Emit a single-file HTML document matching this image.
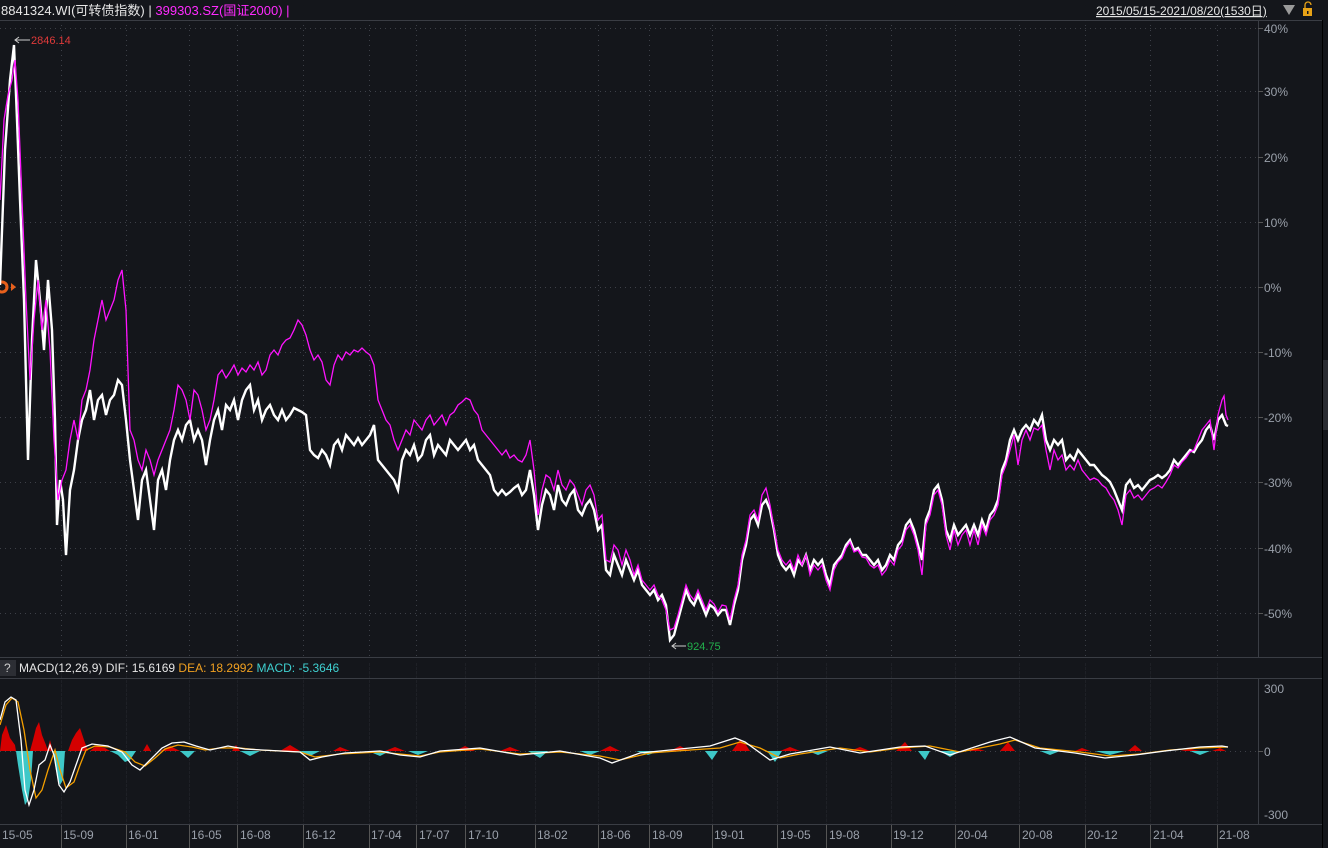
<!DOCTYPE html>
<html><head><meta charset="utf-8"><style>
html,body{margin:0;padding:0;background:#14161b;width:1328px;height:848px;overflow:hidden;font-family:"Liberation Sans","Noto Sans CJK SC",sans-serif}
svg{position:absolute;left:0;top:0}
</style></head><body>
<svg width="1328" height="848" viewBox="0 0 1328 848" xmlns="http://www.w3.org/2000/svg" font-family="Liberation Sans, Noto Sans CJK SC, sans-serif">
<rect width="1328" height="848" fill="#14161b"/>
<!-- frame lines -->
<g stroke="#3a3d44" stroke-width="1" fill="none">
<line x1="0" y1="20.5" x2="1322" y2="20.5"/>
<line x1="0" y1="657.5" x2="1322" y2="657.5"/>
<line x1="0" y1="678.5" x2="1322" y2="678.5"/>
<line x1="0" y1="824.5" x2="1322" y2="824.5"/>
<line x1="1258.5" y1="20" x2="1258.5" y2="657"/>
<line x1="1258.5" y1="678" x2="1258.5" y2="824"/>
</g>
<line x1="1322.5" y1="20" x2="1322.5" y2="848" stroke="#000" stroke-width="1"/>
<rect x="1323" y="360" width="5" height="70" fill="#2a2c32"/>
<!-- grid -->
<g stroke="#3d4048" stroke-width="1" stroke-dasharray="1,4" fill="none">
<line x1="0" y1="28.5" x2="1258" y2="28.5"/><line x1="0" y1="91.5" x2="1258" y2="91.5"/><line x1="0" y1="157.5" x2="1258" y2="157.5"/><line x1="0" y1="222.5" x2="1258" y2="222.5"/><line x1="0" y1="287.5" x2="1258" y2="287.5"/><line x1="0" y1="352.5" x2="1258" y2="352.5"/><line x1="0" y1="417.5" x2="1258" y2="417.5"/><line x1="0" y1="482.5" x2="1258" y2="482.5"/><line x1="0" y1="548.5" x2="1258" y2="548.5"/><line x1="0" y1="613.5" x2="1258" y2="613.5"/>
<line x1="0" y1="751.5" x2="1258" y2="751.5"/>
<g id="vg">
<line x1="61.5" y1="20" x2="61.5" y2="657"/><line x1="126.5" y1="20" x2="126.5" y2="657"/><line x1="189.5" y1="20" x2="189.5" y2="657"/><line x1="237.5" y1="20" x2="237.5" y2="657"/><line x1="303.5" y1="20" x2="303.5" y2="657"/><line x1="369.5" y1="20" x2="369.5" y2="657"/><line x1="416.5" y1="20" x2="416.5" y2="657"/><line x1="465.5" y1="20" x2="465.5" y2="657"/><line x1="535.5" y1="20" x2="535.5" y2="657"/><line x1="598.5" y1="20" x2="598.5" y2="657"/><line x1="649.5" y1="20" x2="649.5" y2="657"/><line x1="712.5" y1="20" x2="712.5" y2="657"/><line x1="777.5" y1="20" x2="777.5" y2="657"/><line x1="826.5" y1="20" x2="826.5" y2="657"/><line x1="891.5" y1="20" x2="891.5" y2="657"/><line x1="955.5" y1="20" x2="955.5" y2="657"/><line x1="1019.5" y1="20" x2="1019.5" y2="657"/><line x1="1085.5" y1="20" x2="1085.5" y2="657"/><line x1="1150.5" y1="20" x2="1150.5" y2="657"/><line x1="1217.5" y1="20" x2="1217.5" y2="657"/>
</g>
<use href="#vg" transform="translate(0,658) scale(1,0.26)"/>
</g>
<!-- axis ticks -->
<g stroke="#555" stroke-width="1">
<line x1="1258" y1="28.5" x2="1263" y2="28.5"/><line x1="1258" y1="91.5" x2="1263" y2="91.5"/><line x1="1258" y1="157.5" x2="1263" y2="157.5"/><line x1="1258" y1="222.5" x2="1263" y2="222.5"/><line x1="1258" y1="287.5" x2="1263" y2="287.5"/><line x1="1258" y1="352.5" x2="1263" y2="352.5"/><line x1="1258" y1="417.5" x2="1263" y2="417.5"/><line x1="1258" y1="482.5" x2="1263" y2="482.5"/><line x1="1258" y1="548.5" x2="1263" y2="548.5"/><line x1="1258" y1="613.5" x2="1263" y2="613.5"/>
<line x1="1258" y1="751.5" x2="1263" y2="751.5"/>
</g>
<g fill="#9aa0aa" font-size="12">
<text x="1264" y="33">40%</text><text x="1264" y="96">30%</text><text x="1264" y="162">20%</text><text x="1264" y="227">10%</text><text x="1264" y="292">0%</text><text x="1264" y="357">-10%</text><text x="1264" y="422">-20%</text><text x="1264" y="487">-30%</text><text x="1264" y="553">-40%</text><text x="1264" y="618">-50%</text>
<text x="1264" y="693">300</text><text x="1264" y="756">0</text><text x="1264" y="819">-300</text>
</g>
<!-- header -->
<text x="1" y="15" font-size="13" fill="#e6e6e6">8841324.WI(可转债指数) <tspan fill="#e6e6e6">|</tspan> <tspan fill="#ff2bff">399303.SZ(国证2000) |</tspan></text>
<text x="1096" y="15" font-size="12" fill="#e6e6e6" text-decoration="underline">2015/05/15-2021/08/20(1530日)</text>
<polygon points="1283,5 1295,5 1289,15" fill="#9a9a9a"/>
<rect x="1303" y="8" width="9" height="8" fill="#e8a317"/>
<path d="M1305,8 v-3 a3,3 0 0 1 6,0" stroke="#e8a317" stroke-width="1.3" fill="none"/>
<rect x="1307" y="11" width="1.5" height="3" fill="#14161b"/>
<!-- marker -->
<circle cx="2" cy="287" r="5" fill="none" stroke="#e8601c" stroke-width="3"/>
<polygon points="11,283 16,287 11,291" fill="#e8601c"/>
<!-- main lines -->
<polyline fill="none" stroke="#fff" stroke-width="2.4" stroke-linejoin="miter" points="0,285 5,150 10,80 14,45 17,120 20,200 24,300 28,460 32,340 36,260 40,300 44,350 48,280 52,330 55,420 57,525 60,480 63,500 66,555 70,490 74,470 78,440 82,420 86,410 90,390 94,420 98,400 102,395 106,415 110,400 114,395 118,380 122,385 126,420 130,460 134,490 138,520 142,480 146,470 150,500 154,530 158,480 162,470 166,490 170,460 174,440 178,430 182,440 186,425 190,420 194,440 198,430 202,440 206,465 210,440 214,420 218,410 222,430 226,405 230,410 234,400 238,420 242,400 246,390 250,385 254,410 258,400 262,420 266,410 270,405 274,415 278,420 282,410 286,420 290,415 294,408 298,410 302,412 306,415 310,450 314,455 318,458 322,450 326,455 330,465 334,445 338,440 342,450 346,435 350,440 354,445 358,438 362,445 366,440 370,435 374,425 378,460 382,465 386,470 390,475 394,480 398,490 402,460 406,450 410,455 414,445 418,460 422,455 426,440 430,435 434,455 438,445 442,450 446,455 450,440 454,445 458,450 462,445 466,440 470,450 474,445 478,460 482,465 486,470 490,475 494,490 498,495 502,490 506,495 510,492 514,488 518,485 522,495 526,490 530,470 534,495 538,530 542,505 546,490 550,495 554,510 558,485 562,500 566,505 570,495 574,490 578,510 582,515 586,505 590,500 594,510 598,530 602,525 606,570 610,575 614,555 618,565 622,575 626,560 630,570 634,580 638,570 642,585 646,590 650,595 654,590 658,600 662,595 666,605 670,640 674,635 678,620 682,605 686,590 690,600 694,605 698,595 702,605 706,615 710,605 714,608 718,615 722,610 726,610 730,625 734,605 738,590 742,560 746,545 750,520 754,515 758,525 762,505 766,500 770,510 774,530 778,555 782,565 786,570 790,565 794,575 798,560 802,565 806,555 810,570 814,560 818,565 822,560 826,575 830,585 834,565 838,560 842,555 846,545 850,540 854,550 858,548 862,555 866,555 870,560 874,565 878,560 882,570 886,565 890,555 894,560 898,545 902,540 906,525 910,520 914,530 918,545 922,560 926,520 930,510 934,490 938,485 942,500 946,530 950,540 954,525 958,535 962,530 966,525 970,535 974,525 978,535 982,520 986,530 990,515 994,510 998,500 1002,470 1006,460 1010,440 1014,430 1018,440 1022,430 1026,425 1030,430 1034,420 1038,425 1042,415 1046,440 1050,450 1054,440 1058,445 1062,440 1066,460 1070,455 1074,460 1078,450 1082,455 1086,460 1090,465 1094,465 1098,470 1102,475 1106,478 1110,482 1114,490 1118,500 1122,510 1126,485 1130,480 1134,488 1138,485 1142,490 1146,485 1150,480 1154,478 1158,475 1162,478 1166,475 1170,470 1174,460 1178,465 1182,460 1186,455 1190,450 1194,452 1198,445 1202,440 1206,430 1210,425 1214,440 1218,420 1222,415 1226,425 1228,426"/>
<polyline fill="none" stroke="#ff14ff" stroke-width="1.3" points="0,200 4,120 8,95 12,80 15,60 18,100 22,200 26,300 30,380 34,320 38,280 42,330 46,300 50,350 54,440 58,500 62,480 66,470 70,440 74,420 78,440 82,400 86,390 90,370 94,340 98,320 102,300 106,320 110,310 114,300 118,280 122,270 126,310 130,430 134,440 138,460 142,470 146,450 150,460 154,475 158,460 162,450 166,440 170,430 174,410 178,385 182,390 186,400 190,420 194,390 198,395 202,410 206,430 210,420 214,400 218,375 222,370 226,378 230,372 234,365 238,375 242,368 246,372 250,365 254,370 258,362 262,375 266,370 270,355 274,350 278,355 282,345 286,340 290,338 294,330 298,320 302,325 306,335 310,350 314,360 318,355 322,362 326,380 330,385 334,365 338,355 342,360 346,352 350,355 354,350 358,352 362,348 366,352 370,355 374,365 378,400 382,410 386,420 390,425 394,440 398,450 402,440 406,430 410,435 414,420 418,425 422,430 426,420 430,415 434,425 438,420 442,415 446,425 450,415 454,412 458,405 462,402 466,398 470,400 474,410 478,415 482,430 486,435 490,440 494,445 498,450 502,455 506,450 510,458 514,455 518,460 522,462 526,455 530,440 534,470 538,515 542,490 546,475 550,478 554,490 558,470 562,485 566,490 570,480 574,485 578,495 582,505 586,490 590,485 594,495 598,520 602,515 606,560 610,562 614,545 618,550 622,565 626,550 630,560 634,575 638,565 642,580 646,585 650,590 654,585 658,595 662,600 666,610 670,630 674,628 678,615 682,600 686,585 690,595 694,600 698,590 702,600 706,610 710,600 714,604 718,612 722,605 726,606 730,620 734,600 738,585 742,555 746,540 750,515 754,510 758,520 762,495 766,488 770,505 774,528 778,550 782,560 786,565 790,560 794,570 798,555 802,565 806,555 810,575 814,565 818,570 822,565 826,580 830,590 834,570 838,562 842,558 846,548 850,542 854,552 858,550 862,557 866,558 870,565 874,568 878,565 882,575 886,570 890,560 894,565 898,550 902,545 906,530 910,525 914,535 918,550 922,575 926,525 930,515 934,495 938,490 942,505 946,535 950,550 954,530 958,545 962,535 966,530 970,545 974,530 978,545 982,525 986,535 990,520 994,515 998,505 1002,475 1006,465 1010,450 1014,435 1018,465 1022,440 1026,430 1030,440 1034,428 1038,430 1042,425 1046,450 1050,470 1054,450 1058,460 1062,455 1066,470 1070,465 1074,470 1078,460 1082,470 1086,475 1090,480 1094,478 1098,480 1102,485 1106,488 1110,495 1114,500 1118,510 1122,525 1126,495 1130,490 1134,498 1138,495 1142,500 1146,495 1150,490 1154,488 1158,485 1162,488 1166,482 1170,475 1174,465 1178,468 1182,462 1186,458 1190,452 1194,450 1198,440 1202,430 1206,425 1210,420 1214,450 1218,415 1222,400 1224,396 1226,415 1228,420"/>
<!-- annotations -->
<line x1="15" y1="40" x2="30" y2="40" stroke="#ccc"/><polyline points="19,37 15,40 19,43" fill="none" stroke="#ccc"/>
<text x="31" y="44" font-size="11" fill="#e03a3a">2846.14</text>
<line x1="672" y1="646" x2="686" y2="646" stroke="#ccc"/><polyline points="676,643 672,646 676,649" fill="none" stroke="#ccc"/>
<text x="687" y="650" font-size="11" fill="#22b14c">924.75</text>
<!-- MACD header -->
<rect x="0" y="660" width="16" height="16" fill="#2c2e34"/>
<text x="4" y="672" font-size="12" fill="#ccc">?</text>
<text x="19" y="672" font-size="12" fill="#e6e6e6">MACD(12,26,9)  DIF: 15.6169  <tspan fill="#f0a020">DEA: 18.2992</tspan>  <tspan fill="#3fd0d0">MACD: -5.3646</tspan></text>
<!-- MACD histogram -->
<g fill="#d40000">
<polygon points="0,751 2,735 6,725 10,738 15,745 16,751"/>
<polygon points="30,751 33,740 36,728 39,722 42,735 46,745 48,751"/>
<polygon points="47,751 50,740 53,751"/>
<polygon points="68,751 72,740 76,733 80,728 84,740 88,751"/>
<polygon points="90,751 96,746 105,748 110,751"/>
<polygon points="143,751 147,744 151,751"/><polygon points="160,751 170,746 180,751"/>
<polygon points="232,751 236,745 240,751"/><polygon points="280,751 290,745 300,751"/>
<polygon points="333,751 340,747 350,751"/><polygon points="385,751 395,747 405,751"/>
<polygon points="455,751 465,746 475,751"/><polygon points="500,751 510,747 520,751"/>
<polygon points="600,751 610,746 620,751"/><polygon points="670,751 680,746 690,751"/>
<polygon points="732,751 740,740 746,745 750,751"/><polygon points="780,751 790,747 800,751"/>
<polygon points="850,751 860,747 870,751"/><polygon points="896,751 905,742 912,751"/>
<polygon points="965,751 975,748 985,751"/><polygon points="1000,751 1008,742 1015,751"/>
<polygon points="1075,751 1082,748 1090,751"/><polygon points="1128,751 1135,745 1142,751"/>
<polygon points="1180,751 1190,749 1200,751"/><polygon points="1212,751 1220,748 1226,751"/>
</g>
<g fill="#3ec8c8">
<polygon points="16,751 18,765 22,790 25,805 28,800 31,780 33,751"/>
<polygon points="53,751 56,770 60,785 63,780 65,751"/>
<polygon points="110,751 118,755 125,762 130,760 136,751"/>
<polygon points="180,751 188,758 195,751"/><polygon points="240,751 250,756 260,751"/>
<polygon points="300,751 310,756 320,751"/><polygon points="368,751 380,756 390,751"/>
<polygon points="408,751 418,755 428,751"/><polygon points="528,751 540,758 548,751"/>
<polygon points="580,751 590,755 600,751"/><polygon points="636,751 648,755 660,751"/>
<polygon points="705,751 712,760 718,751"/><polygon points="767,751 775,762 782,751"/>
<polygon points="808,751 818,755 828,751"/><polygon points="918,751 925,760 930,751"/>
<polygon points="940,751 950,757 960,751"/><polygon points="1040,751 1050,755 1060,751"/>
<polygon points="1095,751 1110,755 1125,751"/><polygon points="1190,751 1200,755 1210,751"/>
</g>
<!-- DEA / DIF -->
<polyline fill="none" stroke="#f5a000" stroke-width="1.3" points="0,725 6,705 12,698 18,702 24,730 30,770 36,798 42,790 48,770 55,750 60,770 66,788 74,782 80,765 86,750 95,746 110,747 125,752 135,762 145,766 155,758 165,749 178,745 192,747 205,750 220,748 240,748 260,750 300,752 315,757 340,754 380,752 400,754 420,756 440,752 480,749 520,754 560,752 600,756 620,760 650,753 690,750 720,748 740,742 760,748 780,758 800,754 840,748 870,752 900,748 930,746 960,752 1000,744 1015,740 1040,748 1080,752 1110,756 1140,754 1170,750 1200,748 1228,747"/>
<polyline fill="none" stroke="#fff" stroke-width="1.3" points="0,720 5,702 11,697 16,700 21,740 25,790 29,805 34,790 39,765 45,760 50,745 54,755 59,785 64,792 70,782 76,765 82,748 92,744 108,746 122,752 132,765 140,770 150,760 162,748 172,743 184,742 196,746 210,750 228,746 245,749 262,750 300,752 310,760 322,757 345,753 380,751 400,755 420,757 440,751 480,748 520,755 560,751 600,758 612,763 640,753 680,749 710,746 735,738 745,742 770,760 790,754 830,747 860,753 900,747 925,746 950,755 990,742 1010,737 1035,748 1075,753 1105,758 1135,755 1165,751 1200,747 1222,746 1228,747"/>
<!-- date labels -->
<g stroke="#555" stroke-width="1">
<line x1="61.5" y1="825" x2="61.5" y2="848"/><line x1="126.5" y1="825" x2="126.5" y2="848"/><line x1="189.5" y1="825" x2="189.5" y2="848"/><line x1="237.5" y1="825" x2="237.5" y2="848"/><line x1="303.5" y1="825" x2="303.5" y2="848"/><line x1="369.5" y1="825" x2="369.5" y2="848"/><line x1="416.5" y1="825" x2="416.5" y2="848"/><line x1="465.5" y1="825" x2="465.5" y2="848"/><line x1="535.5" y1="825" x2="535.5" y2="848"/><line x1="598.5" y1="825" x2="598.5" y2="848"/><line x1="649.5" y1="825" x2="649.5" y2="848"/><line x1="712.5" y1="825" x2="712.5" y2="848"/><line x1="777.5" y1="825" x2="777.5" y2="848"/><line x1="826.5" y1="825" x2="826.5" y2="848"/><line x1="891.5" y1="825" x2="891.5" y2="848"/><line x1="955.5" y1="825" x2="955.5" y2="848"/><line x1="1019.5" y1="825" x2="1019.5" y2="848"/><line x1="1085.5" y1="825" x2="1085.5" y2="848"/><line x1="1150.5" y1="825" x2="1150.5" y2="848"/><line x1="1217.5" y1="825" x2="1217.5" y2="848"/>
</g>
<g fill="#9aa0aa" font-size="12">
<text x="2" y="839">15-05</text><text x="63" y="839">15-09</text><text x="128" y="839">16-01</text><text x="191" y="839">16-05</text><text x="240" y="839">16-08</text><text x="305" y="839">16-12</text><text x="371" y="839">17-04</text><text x="419" y="839">17-07</text><text x="468" y="839">17-10</text><text x="537" y="839">18-02</text><text x="600" y="839">18-06</text><text x="652" y="839">18-09</text><text x="714" y="839">19-01</text><text x="780" y="839">19-05</text><text x="829" y="839">19-08</text><text x="893" y="839">19-12</text><text x="957" y="839">20-04</text><text x="1022" y="839">20-08</text><text x="1087" y="839">20-12</text><text x="1153" y="839">21-04</text><text x="1219" y="839">21-08</text>
</g>
</svg>
</body></html>
